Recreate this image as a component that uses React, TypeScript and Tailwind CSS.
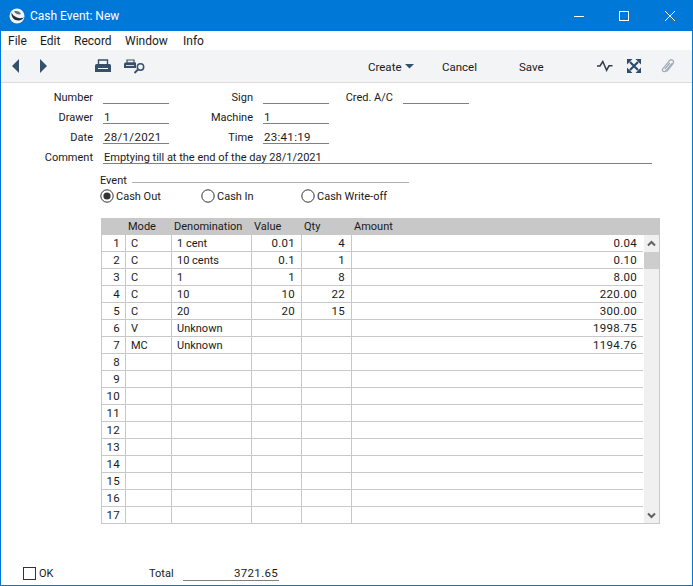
import React from "react";

const rows: [string, string, string, string, string, string][] = [
  ["1", "C", "1 cent", "0.01", "4", "0.04"],
  ["2", "C", "10 cents", "0.1", "1", "0.10"],
  ["3", "C", "1", "1", "8", "8.00"],
  ["4", "C", "10", "10", "22", "220.00"],
  ["5", "C", "20", "20", "15", "300.00"],
  ["6", "V", "Unknown", "", "", "1998.75"],
  ["7", "MC", "Unknown", "", "", "1194.76"],
  ...Array.from({ length: 10 }, (_, i): [string, string, string, string, string, string] => [String(i + 8), "", "", "", "", ""]),
];

function Field({ label, value, labelW, fieldW, numeric }: { label: string; value?: string; labelW: string; fieldW: string; numeric?: boolean }) {
  return (
    <div className="flex h-5 items-stretch">
      <div className={`${labelW} text-right leading-[28px] pr-[10px]`}>{label}</div>
      <div className={`${fieldW} border-b border-[#808080] pl-px h-5 ${numeric ? "text-[11.5px] tracking-[0.3px] leading-[26px]" : "leading-[28px]"}`}>{value}</div>
    </div>
  );
}

function Radio({ label, checked, w }: { label: string; checked?: boolean; w: string }) {
  return (
    <div className={`flex items-center ${w}`}>
      <svg width="14" height="14" viewBox="0 0 14 14" className="shrink-0">
        <circle cx="7" cy="7" r="6.2" fill="white" stroke="#333" strokeWidth="1" />
        {checked && <circle cx="7" cy="7" r="3.6" fill="#333" />}
      </svg>
      <span className="ml-[2px] pt-[2px]">{label}</span>
    </div>
  );
}

export default function App() {
  return (
    <div className="w-[693px] h-[586px] flex flex-col bg-white border-x border-b border-[#0078d7] font-['Roboto',sans-serif] text-[11px] text-[#1a1a1a] overflow-hidden">
      {/* Title bar */}
      <div className="h-[31px] -mx-px bg-[#0078d7] flex items-center shrink-0 text-white">
        <svg width="16" height="16" viewBox="0 0 16 16" className="ml-[9px]">
          <circle cx="8" cy="8" r="7.5" fill="#f2f4f6" />
          <path d="M2.5 4.5C2 9 5 12.5 9.5 12.5C12 12.5 14 11 15 9C13.5 10.5 10.5 10.5 8 9.5C5 8.5 3.5 6.5 2.5 4.5Z" fill="#1f2d3d" />
          <path d="M5 3.5C7.5 2.5 11 3.5 12 6C10 7 6.5 6 5 3.5Z" fill="#5d6f82" />
        </svg>
        <span className="ml-[5px] text-[12px]">Cash Event: New</span>
        <div className="ml-auto flex items-center">
          <svg width="12" height="12" viewBox="0 0 12 12" className="mr-[33px]"><path d="M1 6.5H11" stroke="white" /></svg>
          <svg width="12" height="12" viewBox="0 0 12 12" className="mr-[34px]"><rect x="1.5" y="1.5" width="9" height="9" fill="none" stroke="white" /></svg>
          <svg width="12" height="12" viewBox="0 0 12 12" className="mr-[17px]"><path d="M1 1L11 11M11 1L1 11" stroke="white" /></svg>
        </div>
      </div>

      {/* Menu bar */}
      <div className="h-[19px] shrink-0 flex items-center pl-[7px] text-[12px]">
        <span className="w-[32px]">File</span>
        <span className="w-[34px]">Edit</span>
        <span className="w-[51px]">Record</span>
        <span className="w-[58px]">Window</span>
        <span>Info</span>
      </div>

      {/* Toolbar */}
      <div className="h-[33px] shrink-0 bg-[#f3f4f6] border-b border-[#dcdcdc] flex items-center text-[11.5px]">
        <svg width="10" height="14" viewBox="0 0 10 14" className="ml-[10px]"><path d="M8 0V14L1 7Z" fill="#36506c" /></svg>
        <svg width="10" height="14" viewBox="0 0 10 14" className="ml-[17px]"><path d="M2 0V14L9 7Z" fill="#36506c" /></svg>
        <svg width="16" height="14" viewBox="0 0 16 14" className="ml-[47px]">
          <path d="M3.5 1H12.5V6H3.5Z" fill="none" stroke="#36506c" strokeWidth="1.4" />
          <path d="M1.5 5H14.5Q16 5 16 6.5V13H0V6.5Q0 5 1.5 5Z" fill="#36506c" />
          <path d="M3 9.5H13" stroke="white" />
        </svg>
        <svg width="21" height="15" viewBox="0 0 21 15" className="ml-[13px]">
          <path d="M3 1H10V4H3Z" fill="none" stroke="#36506c" strokeWidth="1.2" />
          <path d="M1 3.5H12V9H0V4.5Z" fill="#36506c" />
          <path d="M2 6.5H10" stroke="white" strokeWidth="0.8" />
          <circle cx="16.5" cy="8" r="3.2" fill="none" stroke="#36506c" strokeWidth="1.5" />
          <path d="M14 10.5L10.5 14" stroke="#36506c" strokeWidth="1.8" />
        </svg>
        <span className="ml-[223px] w-[37px] pt-[3px]">Create</span>
        <svg width="9" height="5" viewBox="0 0 9 5" className="mt-px"><path d="M0 0H9L4.5 4.5Z" fill="#36506c" /></svg>
        <span className="ml-[28px] w-[77px] pt-[3px]">Cancel</span>
        <span className="w-[78px] pt-[3px]">Save</span>
        <svg width="16" height="12" viewBox="0 0 16 12">
          <path d="M0 6H3L5.8 1.5L9.6 10.2L12 5.8H15.5" fill="none" stroke="#333c46" strokeWidth="1.5" />
        </svg>
        <svg width="14" height="14" viewBox="0 0 14 14" className="ml-[14px]">
          <path d="M3 3L11 11M11 3L3 11" stroke="#2d4b6b" strokeWidth="2.2" />
          <path d="M0 0H5.5L0 5.5ZM14 0V5.5L8.5 0ZM0 14V8.5L5.5 14ZM14 14H8.5L14 8.5Z" fill="#2d4b6b" />
        </svg>
        <svg width="15" height="16" viewBox="0 0 15 16" className="ml-[19px]">
          <path d="M12 5.5L6 12.8C4.5 14.5 1.8 13.5 2.5 11.2L9.5 2.6C11.5 .6 14.8 2.6 13 5.5L6.5 13.5M9.8 5L4.8 11.2" fill="none" stroke="#9fabb7" strokeWidth="1.3" />
        </svg>
      </div>

      {/* Header fields */}
      <div className="flex flex-col shrink-0 pt-px">
        <div className="flex">
          <Field label="Number" labelW="w-[102px]" fieldW="w-[66px]" />
          <Field label="Sign" labelW="w-[94px]" fieldW="w-[66px]" />
          <Field label="Cred. A/C" labelW="w-[74px]" fieldW="w-[66px]" />
        </div>
        <div className="flex">
          <Field label="Drawer" value="1" labelW="w-[102px]" fieldW="w-[66px]" numeric />
          <Field label="Machine" value="1" labelW="w-[94px]" fieldW="w-[66px]" numeric />
        </div>
        <div className="flex">
          <Field label="Date" value="28/1/2021" labelW="w-[102px]" fieldW="w-[66px]" numeric />
          <Field label="Time" value="23:41:19" labelW="w-[94px]" fieldW="w-[66px]" numeric />
        </div>
        <div className="flex">
          <Field label="Comment" value="Emptying till at the end of the day 28/1/2021" labelW="w-[102px]" fieldW="w-[549px]" />
        </div>
      </div>

      {/* Event group */}
      <div className="ml-[99px] w-[309px] mt-[9px] shrink-0">
        <div className="flex items-center h-[15px]">
          <span className="pt-[2px]">Event</span>
          <div className="flex-1 border-t border-[#b0b0b0] ml-[5px] mt-[3px]" />
        </div>
        <div className="flex h-4">
          <Radio label="Cash Out" checked w="w-[101px]" />
          <Radio label="Cash In" w="w-[100px]" />
          <Radio label="Cash Write-off" w="w-[108px]" />
        </div>
      </div>

      {/* Table */}
      <div className="ml-[100px] w-[559px] mt-[14px] shrink-0 border-b border-r border-[#c8c8c8] relative">
        <div className="flex h-[17px] bg-[#c8c8c8] leading-[17px]">
          <div className="w-[24px]" />
          <div className="w-[46px] pl-[3px]">Mode</div>
          <div className="w-[80px] pl-[3px]">Denomination</div>
          <div className="w-[50px] pl-[3px]">Value</div>
          <div className="w-[50px] pl-[3px]">Qty</div>
          <div className="flex-1 pl-[3px]">Amount</div>
        </div>
        <div className="flex">
          <div className="w-[542px] border-l border-[#c8c8c8]">
            {rows.map((r) => (
              <div key={r[0]} className="flex h-[17px] leading-[18px] border-b border-[#c8c8c8] last:border-b-0 last:h-[16px]">
                <div className="w-[24px] border-r border-[#c8c8c8] pr-[5px] text-right text-[11.5px] tracking-[0.3px] leading-[16px]">{r[0]}</div>
                <div className="w-[46px] border-r border-[#c8c8c8] pl-[5px]">{r[1]}</div>
                <div className="w-[80px] border-r border-[#c8c8c8] pl-[5px]">{r[2]}</div>
                <div className="w-[50px] border-r border-[#c8c8c8] pr-[6px] text-right text-[11.5px] tracking-[0.3px] leading-[16px]">{r[3]}</div>
                <div className="w-[50px] border-r border-[#c8c8c8] pr-[6px] text-right text-[11.5px] tracking-[0.3px] leading-[16px]">{r[4]}</div>
                <div className="flex-1 pr-[6px] text-right text-[11.5px] tracking-[0.3px] leading-[16px]">{r[5]}</div>
              </div>
            ))}
          </div>
          <div className="w-[15px] bg-[#f0f0f0] flex flex-col items-center ml-px">
            <div className="h-[17px] flex items-center justify-center">
              <svg width="9" height="7" viewBox="0 0 9 7"><path d="M1 5.5L4.5 2L8 5.5" fill="none" stroke="#606060" strokeWidth="2" /></svg>
            </div>
            <div className="w-full h-[17px] bg-[#cdcdcd]" />
            <div className="mt-auto h-[16px] flex items-center justify-center">
              <svg width="9" height="7" viewBox="0 0 9 7"><path d="M1 1.5L4.5 5L8 1.5" fill="none" stroke="#606060" strokeWidth="2" /></svg>
            </div>
          </div>
        </div>
      </div>

      {/* Footer */}
      <div className="mt-auto mb-[4px] flex items-center h-[15px] shrink-0">
        <div className="ml-[22px] w-[13px] h-[13px] border border-[#333]" />
        <span className="ml-[3px] w-[110px] pt-[2px]">OK</span>
        <span className="w-[34px] pt-[2px]">Total</span>
        <div className="w-[96px] border-b border-[#808080] text-right pr-px leading-[14px] h-[15px] text-[11.5px] tracking-[0.3px]">3721.65</div>
      </div>
    </div>
  );
}
